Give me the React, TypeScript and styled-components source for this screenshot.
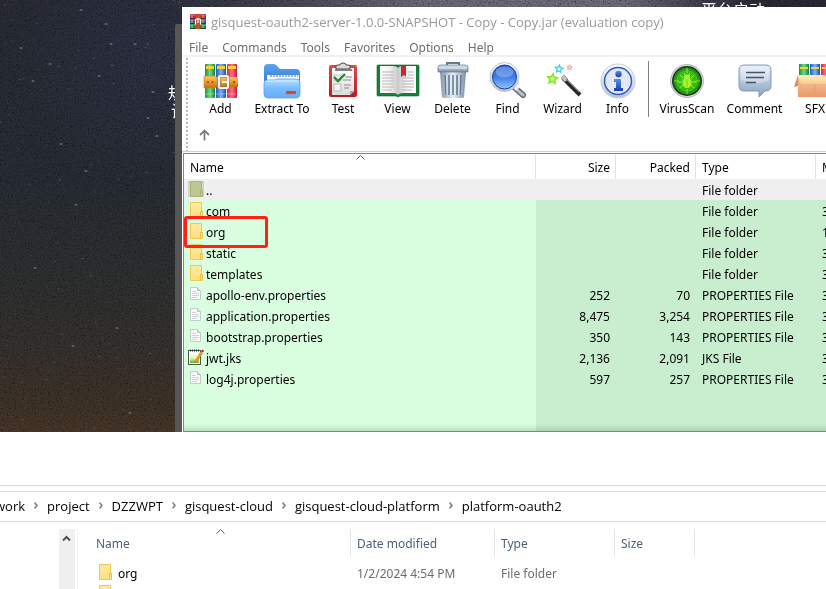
import React from "react";
import styled, { createGlobalStyle } from "styled-components";

const GlobalStyle = createGlobalStyle`
  *, *::before, *::after { box-sizing: border-box; }
  html, body { margin: 0; padding: 0; }
  body {
    overflow: hidden;
    background: #fff;
    color: #000;
    font-family: "Noto Sans", "Noto Sans CJK SC", sans-serif;
    font-size: 12px;
    line-height: 20px;
  }
  button {
    margin: 0;
    padding: 0;
    border: 0;
    background: none;
    color: inherit;
    font: inherit;
    white-space: nowrap;
    cursor: default;
  }
  table { border-collapse: separate; border-spacing: 0; }
  svg { display: block; }
`;

const wideText = `
  font-family: "Open Sans", "Noto Sans", sans-serif;
  font-size: 13px;
`;

/* ---------- Desktop ---------- */

const Page = styled.div`
  display: flex;
  flex-direction: column;
  height: 100vh;
  overflow: hidden;
`;

const Desktop = styled.section`
  position: relative;
  flex: none;
  padding: 7px 0 0 182px;
  overflow: hidden;
  background:
    linear-gradient(90deg, transparent 160px, #3c3b47 280px, #5f5b69 420px, #625e6b 620px, #34333f 710px, #23242d 760px) 0 0 / 100% 8px no-repeat,
    radial-gradient(circle 130px at 150px 50px, rgba(42, 46, 72, 0.5), transparent),
    linear-gradient(#23262e 0, #22272d 180px, #27292a 270px, #2e2b28 350px, #362c22 405px, #3e2e23 432px);
`;

const Sky = styled.svg`
  position: absolute;
  inset: 0;
  width: 100%;
  height: 100%;
`;

const Grain = styled.rect`
  mix-blend-mode: overlay;
`;

const DesktopLabel = styled.span<{ $left: number; $top: number }>`
  position: absolute;
  left: ${(p) => p.$left}px;
  top: ${(p) => p.$top}px;
  color: #fff;
  font-family: "Noto Sans CJK SC", sans-serif;
  font-size: 16px;
  line-height: 16px;
  white-space: nowrap;
`;

const BackWindow = styled.div`
  position: absolute;
  left: 175px;
  top: 24px;
  bottom: 0;
  width: 20px;
  border-radius: 2px 0 0 0;
  background: #555;
`;

function NightSky() {
  const stars: { x: number; y: number; w: number; o: number; c: string }[] = [];
  let seed = 41;
  const next = () => {
    seed = (seed * 16807) % 2147483647;
    return seed / 2147483647;
  };
  for (let i = 0; i < 130; i++) {
    stars.push({
      x: next() * 182,
      y: Math.pow(next(), 1.35) * 430,
      w: 0.6 + next() * 0.5,
      o: 0.1 + next() * 0.22,
      c: next() > 0.85 ? "#c9a878" : "#aeb4bd",
    });
  }
  const bright: [number, number][] = [
    [106, 24], [21, 48], [50, 64], [99, 76], [33, 81], [148, 118], [157, 136], [61, 144],
    [86, 171], [76, 205], [153, 92], [111, 44], [73, 346], [130, 413], [35, 268], [117, 328], [81, 10], [135, 44],
  ];
  return (
    <Sky aria-hidden="true">
      <filter id="grain" x="0" y="0" width="100%" height="100%">
        <feTurbulence type="fractalNoise" baseFrequency="0.6" numOctaves="3" seed="7" />
        <feColorMatrix values="0.33 0.33 0.33 0 0  0.33 0.33 0.33 0 0  0.33 0.33 0.33 0 0  0 0 0 0 1" />
        <feComponentTransfer>
          <feFuncR type="linear" slope="2.4" intercept="-0.85" />
          <feFuncG type="linear" slope="2.4" intercept="-0.85" />
          <feFuncB type="linear" slope="2.4" intercept="-0.85" />
        </feComponentTransfer>
      </filter>
      <Grain width="100%" height="100%" filter="url(#grain)" opacity="0.3" />
      {stars.map((s, i) => (
        <ellipse key={i} cx={s.x} cy={s.y} rx={s.w * 1.3} ry={s.w * 0.6} fill={s.c} opacity={s.o} />
      ))}
      {bright.map(([x, y], i) => (
        <ellipse key={i} cx={x} cy={y} rx="1.7" ry="0.8" fill={i % 3 ? "#b3b6ba" : "#c9ae84"} opacity="0.55" />
      ))}
    </Sky>
  );
}

/* ---------- Archive window ---------- */

const ArchiveWindow = styled.main`
  position: relative;
  background: #fff;
`;

const TitleBar = styled.header`
  display: flex;
  align-items: center;
  gap: 5px;
  height: 30px;
  padding-left: 8px;
  color: #999;
  white-space: nowrap;
  ${wideText}
`;

const MenuBar = styled.nav`
  display: flex;
  gap: 14px;
  height: 20px;
  padding-left: 7px;
  border-bottom: 2px solid #f0f0f0;
  color: #6d6d6d;
  line-height: 22px;
`;

const ToolArea = styled.div`
  display: flex;
  height: 95px;
  padding-left: 4px;
  border-bottom: 1px solid #d0d0d0;
  overflow: hidden;
`;

const Grip = styled.div`
  flex: none;
  width: 2px;
  margin: 1px 5px 0 0;
  background: repeating-linear-gradient(#b9b9b9 0 2px, transparent 2px 4px);
`;

const ToolRows = styled.div`
  flex: 1;
  min-width: 0;
`;

const ToolRow = styled.div`
  display: flex;
  height: 61px;
  padding-top: 4px;
`;

const ToolButton = styled.button<{ $width: number }>`
  display: flex;
  flex: none;
  flex-direction: column;
  align-items: center;
  width: ${(p) => p.$width}px;
  padding-top: 2px;
`;

const ToolIcon = styled.svg`
  width: 44px;
  height: 36px;
  overflow: visible;
`;

const ToolSeparator = styled.span`
  flex: none;
  width: 1px;
  height: 56px;
  margin: 0 3px;
  background: #808080;
`;

const UpButton = styled.button`
  display: grid;
  place-items: center;
  width: 22px;
  height: 34px;
`;

const FilePane = styled.div`
  position: relative;
  margin-top: 1px;
  border: solid #7f8a85;
  border-width: 1px 0 1px 1px;
  margin-left: 1px;
  padding-bottom: 42px;
  background:
    linear-gradient(transparent, rgba(60, 100, 75, 0.2)) 0 100% / 100% 7px no-repeat,
    linear-gradient(90deg, #d9ffe0 352px, #c9eecf 352px);
`;

const FileTable = styled.table`
  width: 100%;
  table-layout: fixed;
`;

const HeadCell = styled.th<{ $right?: boolean }>`
  position: relative;
  height: 25px;
  padding: 2px 5px 0 6px;
  border-right: 1px solid #e2e2e2;
  background: #fff;
  font-weight: 400;
  text-align: ${(p) => (p.$right ? "right" : "left")};
  white-space: nowrap;
  overflow: hidden;
  &:last-child { border-right: 0; }
`;

const SortCaret = styled.svg<{ $top: number }>`
  position: absolute;
  left: 50%;
  top: ${(p) => p.$top}px;
  width: 9px;
  height: 5px;
  margin-left: -4px;
`;

const FileRow = styled.tr<{ $parent?: boolean }>`
  background: ${(p) => (p.$parent ? "#efefef" : "transparent")};
`;

const FileCell = styled.td<{ $right?: boolean }>`
  height: 21px;
  padding: 3px 6px 0;
  line-height: 18px;
  text-align: ${(p) => (p.$right ? "right" : "left")};
  white-space: nowrap;
  overflow: hidden;
`;

const FileName = styled.span`
  display: flex;
  align-items: center;
  gap: 2px;
  height: 18px;
  margin-left: -2px;
`;

const RowIcon = styled.svg`
  flex: none;
  width: 16px;
  height: 16px;
  margin-bottom: 4px;
`;

const Highlight = styled.div`
  position: absolute;
  left: 0;
  top: 62px;
  width: 84px;
  height: 32px;
  border: 3px solid #ff2113;
  border-radius: 3px;
`;

/* ---------- Explorer window ---------- */

const Explorer = styled.section`
  flex: 1;
  min-height: 0;
  padding-top: 53px;
  background: #fff;
  overflow: hidden;
`;

const AddressBar = styled.nav`
  display: flex;
  align-items: center;
  gap: 9px;
  height: 31px;
  margin-top: 5px;
  padding-bottom: 2px;
  border: solid #d9d9d9;
  border-width: 1px 0;
  white-space: nowrap;
  ${wideText}
`;

const Crumb = styled.button`
  &:first-child { margin-left: -5px; }
`;

const Rule = styled.div`
  height: 1px;
  background: #d9d9d9;
`;

const Listing = styled.div`
  display: flex;
  height: 100%;
  padding-top: 7px;
`;

const ScrollTrack = styled.div`
  display: flex;
  flex: none;
  justify-content: center;
  width: 16px;
  margin-left: 59px;
  padding: 6px 2px 0 0;
  background: #f0f0f0;
`;

const Details = styled.div`
  flex: 1;
  min-width: 0;
  margin-left: 2px;
  padding-left: 12px;
  border-left: 1px solid #f3f3f3;
`;

const DetailsTable = styled.table`
  table-layout: fixed;
  width: 605px;
`;

const DetailsHead = styled.th`
  position: relative;
  height: 27px;
  padding: 2px 6px 0;
  border-right: 1px solid #e2e2e2;
  color: #4c607a;
  font-weight: 400;
  text-align: left;
`;

const DetailsCell = styled.td<{ $top?: number }>`
  height: ${(p) => p.$top || 21}px;
  padding: 0 6px;
  color: #6d6d6d;
  line-height: 21px;
  white-space: nowrap;
  vertical-align: bottom;
`;

const DetailsName = styled.span`
  display: flex;
  align-items: center;
  gap: 5px;
  height: 21px;
  margin-left: 1px;
  color: #000;
`;

/* ---------- Icons ---------- */

function Gradients() {
  const g = (id: string, a: string, b: string, c?: string, horizontal?: boolean) => (
    <linearGradient id={id} x1="0" y1="0" x2={horizontal ? "1" : "0"} y2={horizontal ? "0" : "1"}>
      <stop offset="0" stopColor={a} />
      <stop offset={c ? "0.5" : "1"} stopColor={b} />
      {c && <stop offset="1" stopColor={c} />}
    </linearGradient>
  );
  return (
    <Defs width="0" height="0" aria-hidden="true">
      <defs>
        {g("bookGreen", "#17923b", "#6fdc82", "#128034", true)}
        {g("bookBlue", "#2456c4", "#7ab2fb", "#1c4cb8", true)}
        {g("bookRed", "#e0234c", "#ff7183", "#c9143c", true)}
        {g("belt", "#fcc768", "#eb9a2c", "#c26d10")}
        {g("folderBack", "#5fa4ee", "#2c78d8")}
        {g("folderFront", "#b4deff", "#79bcfc", "#66adf8")}
        {g("board", "#e8474b", "#b81c22")}
        {g("paper", "#ffffff", "#dcdcdc")}
        {g("steel", "#8195ab", "#e8eff6", "#7c90a6", true)}
        {g("lid", "#dbe6f0", "#7a90a8")}
        {g("glass", "#2458cc", "#3f7de8", "#8fc6ff")}
        {g("silver", "#ffffff", "#b8c4d2")}
        {g("info", "#5b8fe8", "#173cba")}
        {g("bubble", "#e7eef8", "#b5c6de", "#8ba0bf")}
        {g("carton", "#f9c8a2", "#ea9a68")}
        {g("flap", "#fff0cd", "#f7cc86")}
        {g("pageLeft", "#ffffff", "#f4f4f4", "#c9c9c9", true)}
        {g("pageRight", "#c9c9c9", "#f4f4f4", "#ffffff", true)}
        {g("notepad", "#ffffff", "#e9f6c0", "#5fae2a")}
        {g("fold", "#ffeaa2", "#ffdf85")}
        <radialGradient id="virus">
          <stop offset="0" stopColor="#4ed41a" />
          <stop offset="0.7" stopColor="#35b312" />
          <stop offset="1" stopColor="#1c860c" />
        </radialGradient>
      </defs>
    </Defs>
  );
}

const Defs = styled.svg`
  position: absolute;
`;

const AddArt = () => (
  <g>
    <rect x="6" y="1" width="10" height="34" rx="1" fill="url(#bookGreen)" />
    <rect x="17" y="1" width="10" height="34" rx="1" fill="url(#bookBlue)" />
    <rect x="28" y="1" width="10" height="34" rx="1" fill="url(#bookRed)" />
    <path d="M7 3h8v3H7zM18 3h8v3h-8zM29 3h8v3h-8z" fill="#f6d32d" />
    <path d="M6 31h9M17 31h9M28 31h9" stroke="#fff" strokeOpacity=".35" />
    <path d="M5 14h34v10H5z" fill="url(#belt)" />
    <path d="M5 13h11l2 2v8l-2 2H5z" fill="url(#belt)" stroke="#d08a24" strokeWidth=".7" />
    <circle cx="9" cy="19" r="1" fill="#8a5206" />
    <circle cx="13.500" cy="19" r="1" fill="#8a5206" />
    <rect x="20" y="13" width="9" height="12" rx="1" fill="none" stroke="#8d705a" strokeWidth="2.800" />
    <rect x="20" y="13" width="9" height="12" rx="1" fill="none" stroke="#f6f3ee" strokeWidth="2" />
    <path d="M23 19h7" stroke="#fff" strokeWidth="2" />
    <circle cx="35" cy="19" r="1" fill="#6d3b00" />
  </g>
);

const ExtractArt = () => (
  <g>
    <path d="M4 5q0-4 4-4h6q2 0 4 3l2 2h16q4 0 4 4v12H4z" fill="url(#folderBack)" />
    <path d="M7 12h32v9H7z" fill="#f7fbff" />
    <path d="M10 13h28" stroke="#9eb3cc" strokeWidth="2" strokeDasharray="2 1" />
    <path d="M4 20q0-3 3-3h8l2-1h19q4 0 4 3v12q0 4-4 4H8q-4 0-4-4z" fill="url(#folderFront)" stroke="#5a9fec" strokeWidth=".8" />
    <path d="M6 19q0-1 2-1h28q2 0 2 1" fill="none" stroke="#d6eeff" />
    <rect x="26" y="28" width="10" height="3" rx=".8" fill="#e8401c" />
  </g>
);

const TestArt = () => (
  <g>
    <rect x="8" y="2" width="28" height="32" rx="2" fill="url(#board)" />
    <path d="M11 5h22v23l-4 4H11z" fill="url(#paper)" />
    <path d="M33 28l-4 4v-4z" fill="#aaa" />
    <path d="M15 6V3q0-1 2-1h2q0-2 3-2t3 2h2q2 0 2 1v3z" fill="#d9dcdf" stroke="#5d3c3c" strokeWidth="1" />
    <path d="M14 7h17" stroke="#6b6b6b" strokeWidth="1.6" />
    <rect x="13" y="21" width="7" height="7" fill="#f4f4f4" stroke="#b9b9b9" />
    <rect x="13" y="12" width="7" height="6" fill="none" stroke="#c4c4c4" />
    <path d="M13 14l4 4 7-7" fill="none" stroke="#1f8a35" strokeWidth="2.4" />
    <path d="M24 14h7M22 17h8M23 22h7M23 25h5" stroke="#8b8b8b" />
  </g>
);

const ViewArt = () => (
  <g>
    <path d="M1 3q0-1 1-1h40q1 0 1 1v29q0 1-1 1H24l-2 1-2-1H2q-1 0-1-1z" fill="#12803a" stroke="#0a6226" strokeWidth=".6" />
    <path d="M4 3h13q4 0 5 2v27q-1-2-5-2H4z" fill="url(#pageLeft)" />
    <path d="M40 3H27q-4 0-5 2v27q1-2 5-2h13z" fill="url(#pageRight)" />
    <path d="M6 9h12M6 12h12M6 15h12M6 18h12M6 21h12M6 24h12M6 27h10M32 9h6M32 12h6M26 15h12M26 18h12M26 21h12M26 24h12M26 27h10" stroke="#b1b1b1" strokeWidth=".9" />
    <path d="M25 3h5v11l-2-2-3 2z" fill="#c82630" />
  </g>
);

const DeleteArt = () => (
  <g>
    <path d="M16 3V0h12v3" fill="none" stroke="#657a92" strokeWidth="2" />
    <path d="M9 9h26l-2 25q-1 1-2 1H13q-1 0-2-1z" fill="url(#steel)" />
    <path d="M14 12l1 20M18 12v20M22 12v20M26 12v20M30 12l-1 20" stroke="#667d96" strokeWidth="1.6" />
    <path d="M16 12v20M20 12v20M24 12v20M28 12v20" stroke="#f2f7fb" strokeWidth=".8" />
    <path d="M7 4q0-2 3-2h24q3 0 3 2v5H7z" fill="url(#lid)" stroke="#60758c" strokeWidth=".7" />
    <path d="M8 5h28" stroke="#fff" strokeOpacity=".8" />
  </g>
);

const FindArt = () => (
  <g>
    <path d="M28 24l9 8" stroke="#66707b" strokeWidth="6" strokeLinecap="round" />
    <path d="M28 24l9 8" stroke="#b9c2cb" strokeWidth="3" strokeLinecap="round" />
    <path d="M29 23l3 3" stroke="#eef2f5" strokeWidth="5" />
    <circle cx="18.500" cy="14" r="14.500" fill="url(#silver)" stroke="#b5bdc8" strokeWidth=".8" />
    <circle cx="18.500" cy="14" r="12" fill="url(#glass)" stroke="#1c3f95" strokeWidth="1" />
    <ellipse cx="18.500" cy="9" rx="9" ry="5.500" fill="#fff" opacity=".28" />
  </g>
);

const starPath = (x: number, y: number, r: number) => {
  let d = "";
  for (let i = 0; i < 10; i++) {
    const a = (Math.PI * i) / 5 - Math.PI / 2 + 0.12;
    const q = i % 2 ? r * 0.48 : r;
    d += `${i ? "L" : "M"}${(x + Math.cos(a) * q).toFixed(1)} ${(y + Math.sin(a) * q).toFixed(1)}`;
  }
  return d + "Z";
};

const WizardArt = () => (
  <g>
    <path d={starPath(18, 6, 4)} fill="#e4fbff" stroke="#38cde8" strokeWidth="1.200" />
    <path d={starPath(28.5, 4.5, 2.7)} fill="#ffe3e3" stroke="#f39a9f" strokeWidth="1" />
    <path d={starPath(11.5, 16, 5)} fill="#e2ff8e" stroke="#8ae834" strokeWidth="1.800" />
    <path d="M22 15l17 17" stroke="#2a2a2a" strokeWidth="4" />
    <path d="M20 15l3-3 4 4-3 3z" fill="#c4c4c4" stroke="#777" strokeWidth=".6" />
    <path d="M25 16l13 13" stroke="#8d8d8d" strokeWidth="1" />
  </g>
);

const InfoArt = () => (
  <g>
    <circle cx="22" cy="18" r="17" fill="url(#silver)" stroke="#c5ccd6" />
    <circle cx="22" cy="18" r="13.500" fill="#e3e9f1" stroke="#2e5cc4" strokeWidth="1.500" />
    <circle cx="22.500" cy="11" r="3.200" fill="url(#info)" />
    <path d="M18 16h7v9h2v3h-9v-3h2v-6h-2z" fill="url(#info)" />
  </g>
);

const VirusArt = () => (
  <g>
    <circle cx="22" cy="18" r="16.500" fill="#d7dcd8" stroke="#a8aeaa" strokeWidth=".8" />
    <circle cx="22" cy="18" r="15" fill="#20352a" />
    <circle cx="22" cy="18" r="13.500" fill="url(#virus)" />
    <path d="M22 5v5M22 26v5M9 18h5M30 18h5" stroke="#7fe044" strokeWidth="1.200" />
    <circle cx="22" cy="18" r="10" fill="none" stroke="#7bdc3d" strokeOpacity=".4" />
    <path d="M18 15l-3-3M17 19h-4M18 22l-3 3M26 15l3-3M27 19h4M26 22l3 3M20 12l-1-2M24 12l1-2" stroke="#9aef3a" strokeWidth="1" fill="none" />
    <ellipse cx="22" cy="19.500" rx="4.500" ry="5.500" fill="#a4f52c" />
    <ellipse cx="22" cy="13.500" rx="3" ry="2" fill="#a4f52c" />
    <path d="M22 16v8" stroke="#6fc21d" strokeWidth=".8" />
  </g>
);

const CommentArt = () => (
  <g>
    <path d="M11 2h22q5 0 5 5v16q0 5-5 5h-1l-6 6v-6H11q-5 0-5-5V7q0-5 5-5z" fill="url(#bubble)" stroke="#8798b3" />
    <path d="M11 4h22q3 0 3 3v10q-14 7-28 0V7q0-3 3-3z" fill="#fff" opacity=".3" />
    <path d="M13 9.500h19M13 14.500h18M13 19.500h10" stroke="#46536a" strokeWidth="1.600" />
  </g>
);

const SfxArt = () => (
  <g>
    <rect x="6" y="1" width="10" height="13" fill="url(#bookGreen)" />
    <rect x="17" y="1" width="10" height="13" fill="url(#bookBlue)" />
    <rect x="28" y="1" width="10" height="13" fill="url(#bookRed)" />
    <path d="M7 4h8v2H7zM18 4h8v2h-8zM29 4h8v2h-8z" fill="#f6d32d" />
    <path d="M5 12h34v22H5z" fill="url(#carton)" />
    <path d="M5 12l-4 12 4-1z" fill="#d88d5b" />
    <path d="M5 12h34l4 9H8z" fill="url(#flap)" />
    <path d="M22 21v13" stroke="#e39a6c" />
  </g>
);

const WinrarIcon = () => (
  <svg width="16" height="16" viewBox="0 0 16 16" aria-hidden="true">
    <rect y="0" width="16" height="5" fill="#b8284a" />
    <rect y="5" width="16" height="5" fill="#3b4fb4" />
    <rect y="10" width="16" height="5" fill="#158c46" />
    <path d="M0 1h16M0 6h16M0 11h16" stroke="#fff" strokeOpacity=".35" />
    <path d="M0 4.500h16M0 9.500h16M0 14.500h16" stroke="#14224c" strokeOpacity=".6" />
    <path d="M2 1v3M13 1v3M2 6v3M13 6v3M2 11v3M13 11v3" stroke="#e9c64a" />
    <path d="M5.500 0h5v15h-5z" fill="#c4511a" />
    <path d="M5.500 10.500V6q0-1 1-1h3q1 0 1 1v4.500M8 4v5" fill="none" stroke="#fff" strokeWidth="1.200" />
  </svg>
);

const FolderIcon = ({ dim }: { dim?: boolean }) => (
  <RowIcon viewBox="0 0 16 16" aria-hidden="true">
    {dim && <rect width="16" height="16" fill="#c5dcc5" />}
    <path d="M2.500 .5h11v9h1v6h-12z" fill={dim ? "#bcc796" : "url(#fold)"} stroke={dim ? "#aeb274" : "#edc94f"} />
    <path d="M12.500 15v-5.500h2V15" fill={dim ? "#bcc796" : "#ffe9a0"} stroke={dim ? "#aeb274" : "#e6bf43"} />
  </RowIcon>
);

const PageIcon = () => (
  <RowIcon viewBox="0 0 16 16" aria-hidden="true">
    <path d="M2.500 1.500h7l3 3v9h-10z" fill="#f9fafa" stroke="#c3ccc8" />
    <path d="M9.500 1.500v3h3" fill="#e6ebe9" stroke="#b7c1bc" />
    <path d="M4 5.500h4M4 7.500h7M4 9.500h7M4 11.500h5" stroke="#cdd3d1" />
  </RowIcon>
);

const NotepadIcon = () => (
  <RowIcon viewBox="0 0 16 16" aria-hidden="true">
    <rect x=".5" y="1.500" width="12" height="14" fill="#fff" stroke="#4d564b" />
    <rect x="2" y="4" width="9" height="10" fill="url(#notepad)" />
    <path d="M2 1.500h10" stroke="#333" strokeWidth="2" strokeDasharray="1 1" />
    <path d="M7 12l5.500-9 2 1.200L9 12.700l-2.200 1z" fill="#f3a71c" stroke="#a86f12" strokeWidth=".5" />
    <path d="M13 2.500l1-2 2 1-1 2z" fill="#b0202a" />
  </RowIcon>
);

const Chevron = () => (
  <svg width="4" height="7" viewBox="0 0 4 7" aria-hidden="true">
    <path d="M.5 .5l2.500 3-2.500 3" fill="none" stroke="#7c7c7c" strokeWidth="1.500" />
  </svg>
);

const Caret = ({ top }: { top: number }) => (
  <SortCaret $top={top} viewBox="0 0 9 5" aria-hidden="true">
    <path d="M.5 4.500l4-4 4 4" fill="none" stroke="#5c5c5c" />
  </SortCaret>
);

/* ---------- Data ---------- */

const menus = ["File", "Commands", "Tools", "Favorites", "Options", "Help"];

const tools: { label: string; width: number; art: React.ReactNode; divided?: boolean }[] = [
  { label: "Add", width: 55, art: <AddArt /> },
  { label: "Extract To", width: 68, art: <ExtractArt /> },
  { label: "Test", width: 54, art: <TestArt /> },
  { label: "View", width: 55, art: <ViewArt /> },
  { label: "Delete", width: 55, art: <DeleteArt /> },
  { label: "Find", width: 55, art: <FindArt /> },
  { label: "Wizard", width: 55, art: <WizardArt /> },
  { label: "Info", width: 55, art: <InfoArt /> },
  { label: "VirusScan", width: 70, art: <VirusArt />, divided: true },
  { label: "Comment", width: 65, art: <CommentArt /> },
  { label: "SFX", width: 56, art: <SfxArt /> },
];

type Kind = "parent" | "folder" | "page" | "notepad";
const files: { name: string; kind: Kind; size?: string; packed?: string; type: string; date?: string }[] = [
  { name: "..", kind: "parent", type: "File folder" },
  { name: "com", kind: "folder", type: "File folder", date: "3" },
  { name: "org", kind: "folder", type: "File folder", date: "1" },
  { name: "static", kind: "folder", type: "File folder", date: "3" },
  { name: "templates", kind: "folder", type: "File folder", date: "3" },
  { name: "apollo-env.properties", kind: "page", size: "252", packed: "70", type: "PROPERTIES File", date: "3" },
  { name: "application.properties", kind: "page", size: "8,475", packed: "3,254", type: "PROPERTIES File", date: "3" },
  { name: "bootstrap.properties", kind: "page", size: "350", packed: "143", type: "PROPERTIES File", date: "3" },
  { name: "jwt.jks", kind: "notepad", size: "2,136", packed: "2,091", type: "JKS File", date: "3" },
  { name: "log4j.properties", kind: "page", size: "597", packed: "257", type: "PROPERTIES File", date: "3" },
];

const crumbs = ["work", "project", "DZZWPT", "gisquest-cloud", "gisquest-cloud-platform", "platform-oauth2"];

const iconFor = (kind: Kind) => {
  if (kind === "page") return <PageIcon />;
  if (kind === "notepad") return <NotepadIcon />;
  return <FolderIcon dim={kind === "parent"} />;
};

export default function App() {
  return (
    <Page>
      <GlobalStyle />
      <Gradients />
      <Desktop>
        <NightSky />
        <DesktopLabel $left={701} $top={1}>平台启动</DesktopLabel>
        <DesktopLabel $left={168} $top={84}>规</DesktopLabel>
        <DesktopLabel $left={171} $top={102}>设</DesktopLabel>
        <BackWindow />
        <ArchiveWindow>
          <TitleBar>
            <WinrarIcon />
            <span>gisquest-oauth2-server-1.0.0-SNAPSHOT - Copy - Copy.jar (evaluation copy)</span>
          </TitleBar>
          <MenuBar>
            {menus.map((m) => (
              <button key={m} type="button">{m}</button>
            ))}
          </MenuBar>
          <ToolArea>
            <Grip />
            <ToolRows>
              <ToolRow>
                {tools.map((t) => (
                  <React.Fragment key={t.label}>
                    {t.divided && <ToolSeparator />}
                    <ToolButton type="button" $width={t.width}>
                      <ToolIcon viewBox="0 0 44 36" aria-hidden="true">{t.art}</ToolIcon>
                      {t.label}
                    </ToolButton>
                  </React.Fragment>
                ))}
              </ToolRow>
              <UpButton type="button" aria-label="Up one level">
                <svg width="11" height="12" viewBox="0 0 11 12" aria-hidden="true">
                  <path d="M5.500 11.500V2M1 6l4.500-4.500L10 6" fill="none" stroke="#7d7d7d" strokeWidth="1.800" />
                </svg>
              </UpButton>
            </ToolRows>
          </ToolArea>
          <FilePane>
            <FileTable>
              <colgroup>
                <col width="352" />
                <col width="80" />
                <col width="80" />
                <col width="120" />
                <col />
              </colgroup>
              <thead>
                <tr>
                  <HeadCell>Name<Caret top={1} /></HeadCell>
                  <HeadCell $right>Size</HeadCell>
                  <HeadCell $right>Packed</HeadCell>
                  <HeadCell>Type</HeadCell>
                  <HeadCell>M</HeadCell>
                </tr>
              </thead>
              <tbody>
                {files.map((f) => (
                  <FileRow key={f.name} $parent={f.kind === "parent"}>
                    <FileCell><FileName>{iconFor(f.kind)}{f.name}</FileName></FileCell>
                    <FileCell $right>{f.size}</FileCell>
                    <FileCell $right>{f.packed}</FileCell>
                    <FileCell>{f.type}</FileCell>
                    <FileCell>{f.date}</FileCell>
                  </FileRow>
                ))}
              </tbody>
            </FileTable>
            <Highlight />
          </FilePane>
        </ArchiveWindow>
      </Desktop>
      <Explorer>
        <Rule />
        <AddressBar aria-label="Address">
          {crumbs.map((c, i) => (
            <React.Fragment key={c}>
              {i > 0 && <Chevron />}
              <Crumb type="button">{c}</Crumb>
            </React.Fragment>
          ))}
        </AddressBar>
        <Listing>
          <ScrollTrack>
            <svg width="9" height="7" viewBox="0 0 9 7" aria-hidden="true">
              <path d="M1 5.500l3.500-3.500L8 5.500" fill="none" stroke="#505050" strokeWidth="2" />
            </svg>
          </ScrollTrack>
          <Details>
            <DetailsTable>
              <colgroup>
                <col width="261" />
                <col width="144" />
                <col width="120" />
                <col width="80" />
              </colgroup>
              <thead>
                <tr>
                  <DetailsHead>Name<Caret top={0} /></DetailsHead>
                  <DetailsHead>Date modified</DetailsHead>
                  <DetailsHead>Type</DetailsHead>
                  <DetailsHead>Size</DetailsHead>
                </tr>
              </thead>
              <tbody>
                <tr>
                  <DetailsCell $top={28}><DetailsName><FolderIcon />org</DetailsName></DetailsCell>
                  <DetailsCell>1/2/2024 4:54 PM</DetailsCell>
                  <DetailsCell>File folder</DetailsCell>
                  <DetailsCell />
                </tr>
                <tr>
                  <DetailsCell><DetailsName><FolderIcon /></DetailsName></DetailsCell>
                  <DetailsCell />
                  <DetailsCell />
                  <DetailsCell />
                </tr>
              </tbody>
            </DetailsTable>
          </Details>
        </Listing>
      </Explorer>
    </Page>
  );
}
